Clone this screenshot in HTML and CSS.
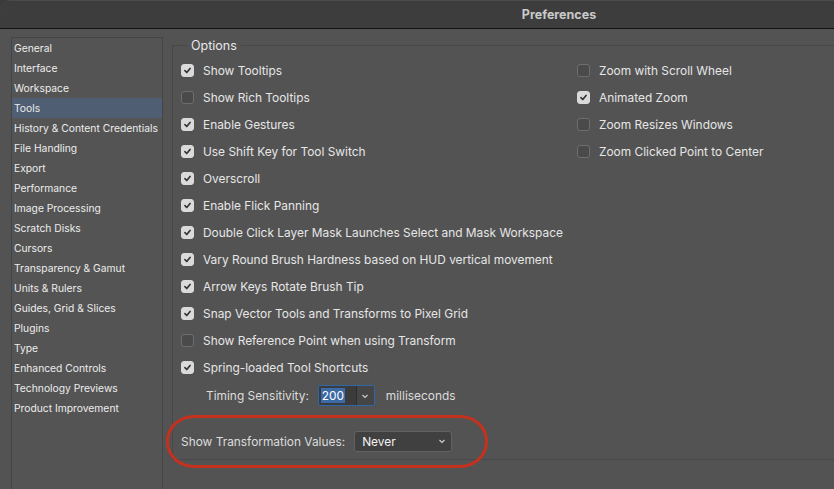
FILE: index.html
```html
<!DOCTYPE html>
<html lang="en">
  <head>
    <meta charset="UTF-8" />
    <meta name="viewport" content="width=device-width, initial-scale=1.0" />
    <title>Preferences</title>
    <link rel="stylesheet" href="styles.css">
  </head>
  <body>
    <div class="window">
      <header class="titlebar">Preferences</header>

      <div class="content">
        <nav class="sidebar">
          <ul>
            <li>General</li>
            <li>Interface</li>
            <li>Workspace</li>
            <li class="selected">Tools</li>
            <li>History &amp; Content Credentials</li>
            <li>File Handling</li>
            <li>Export</li>
            <li>Performance</li>
            <li>Image Processing</li>
            <li>Scratch Disks</li>
            <li>Cursors</li>
            <li>Transparency &amp; Gamut</li>
            <li>Units &amp; Rulers</li>
            <li>Guides, Grid &amp; Slices</li>
            <li>Plugins</li>
            <li>Type</li>
            <li>Enhanced Controls</li>
            <li>Technology Previews</li>
            <li>Product Improvement</li>
          </ul>
        </nav>

        <section class="main">
          <fieldset class="options">
            <legend>Options</legend>

            <div class="columns">
              <div class="col left-col">
                <label class="opt"><span class="box on"><svg viewBox="0 0 12 12"><path d="M3.2 6.2 L5.2 8.2 L8.8 3.8" /></svg></span>Show Tooltips</label>
                <label class="opt"><span class="box"></span>Show Rich Tooltips</label>
                <label class="opt"><span class="box on"><svg viewBox="0 0 12 12"><path d="M3.2 6.2 L5.2 8.2 L8.8 3.8" /></svg></span>Enable Gestures</label>
                <label class="opt"><span class="box on"><svg viewBox="0 0 12 12"><path d="M3.2 6.2 L5.2 8.2 L8.8 3.8" /></svg></span>Use Shift Key for Tool Switch</label>
                <label class="opt"><span class="box on"><svg viewBox="0 0 12 12"><path d="M3.2 6.2 L5.2 8.2 L8.8 3.8" /></svg></span>Overscroll</label>
                <label class="opt"><span class="box on"><svg viewBox="0 0 12 12"><path d="M3.2 6.2 L5.2 8.2 L8.8 3.8" /></svg></span>Enable Flick Panning</label>
                <label class="opt"><span class="box on"><svg viewBox="0 0 12 12"><path d="M3.2 6.2 L5.2 8.2 L8.8 3.8" /></svg></span>Double Click Layer Mask Launches Select and Mask Workspace</label>
                <label class="opt"><span class="box on"><svg viewBox="0 0 12 12"><path d="M3.2 6.2 L5.2 8.2 L8.8 3.8" /></svg></span>Vary Round Brush Hardness based on HUD vertical movement</label>
                <label class="opt"><span class="box on"><svg viewBox="0 0 12 12"><path d="M3.2 6.2 L5.2 8.2 L8.8 3.8" /></svg></span>Arrow Keys Rotate Brush Tip</label>
                <label class="opt"><span class="box on"><svg viewBox="0 0 12 12"><path d="M3.2 6.2 L5.2 8.2 L8.8 3.8" /></svg></span>Snap Vector Tools and Transforms to Pixel Grid</label>
                <label class="opt"><span class="box"></span>Show Reference Point when using Transform</label>
                <label class="opt"><span class="box on"><svg viewBox="0 0 12 12"><path d="M3.2 6.2 L5.2 8.2 L8.8 3.8" /></svg></span>Spring-loaded Tool Shortcuts</label>
              </div>
              <div class="col right-col">
                <label class="opt"><span class="box"></span>Zoom with Scroll Wheel</label>
                <label class="opt"><span class="box on"><svg viewBox="0 0 12 12"><path d="M3.2 6.2 L5.2 8.2 L8.8 3.8" /></svg></span>Animated Zoom</label>
                <label class="opt"><span class="box"></span>Zoom Resizes Windows</label>
                <label class="opt"><span class="box"></span>Zoom Clicked Point to Center</label>
              </div>
            </div>

            <div class="timing">
              <span>Timing Sensitivity:</span>
              <span class="combo">
                <span class="combo-value"><span class="sel">200</span></span>
                <span class="combo-arrow"><svg viewBox="0 0 10 10"><path d="M2.5 4 L5 6.5 L7.5 4" /></svg></span>
              </span>
              <span>milliseconds</span>
            </div>

            <div class="transform">
              <span>Show Transformation Values:</span>
              <span class="dropdown">
                <span>Never</span>
                <svg viewBox="0 0 10 10"><path d="M2.5 4 L5 6.5 L7.5 4" /></svg>
              </span>
            </div>
          </fieldset>

          <div class="highlight"></div>
        </section>
      </div>
    </div>
  </body>
</html>
```

FILE: styles.css
```css
* {
  box-sizing: border-box;
}
html,
body {
  margin: 0;
  padding: 0;
  height: 100%;
  overflow: hidden;
}
body {
  background: #3a3a3a;
  font-family: Inter, "Liberation Sans", sans-serif;
  color: #e4e4e4;
}
.window {
  height: 100%;
  background: #535353;
  border-top-left-radius: 11px;
  overflow: hidden;
  display: flex;
  flex-direction: column;
}
.titlebar {
  height: 29px;
  flex: none;
  background: #3d3d3d;
  border-bottom: 1px solid #111;
  border-top: 1px solid #4a4a4a;
  color: #c9c9c9;
  font-weight: 700;
  font-size: 12.5px;
  display: flex;
  align-items: center;
  justify-content: center;
  padding-left: 284px;
}
.content {
  flex: 1;
  display: flex;
  padding: 8px 0 0 11px;
}
.sidebar {
  width: 152px;
  flex: none;
  border: 1px solid #454545;
  border-bottom: none;
  background: #545454;
}
.sidebar ul {
  list-style: none;
  margin: 0;
  padding: 0;
}
.sidebar li {
  height: 20px;
  line-height: 20px;
  padding-left: 2px;
  font-size: 10.3px;
  color: #ececec;
  white-space: nowrap;
}
.sidebar li.selected {
  background: #4f5e72;
}
.main {
  flex: 1;
  position: relative;
  padding-left: 9px;
}
.options {
  margin: 1px -20px 0 0;
  border: 1px solid #484848;
  border-right: none;
  padding: 4px 0 12px 8px;
  height: 422px;
}
.options legend {
  font-size: 12.5px;
  color: #e8e8e8;
  padding: 0 4px;
  margin-left: 6px;
}
.columns {
  display: flex;
}
.left-col {
  width: 396px;
}
.opt {
  display: flex;
  align-items: center;
  height: 27px;
  font-size: 11.9px;
  white-space: nowrap;
  color: #e6e6e6;
}
.box {
  width: 13px;
  height: 13px;
  border-radius: 3px;
  border: 1px solid #6e6e6e;
  background: #4a4a4a;
  margin-right: 9px;
  flex: none;
  display: flex;
}
.box.on {
  background: #dadada;
  border-color: #dadada;
}
.box svg {
  width: 11px;
  height: 11px;
}
.box path {
  fill: none;
  stroke: #333;
  stroke-width: 1.8;
  stroke-linecap: round;
  stroke-linejoin: round;
}
.timing {
  display: flex;
  align-items: center;
  height: 29px;
  padding-left: 25px;
  font-size: 11.9px;
  color: #dcdcdc;
  gap: 9px;
}
.combo {
  display: flex;
  height: 21px;
  width: 57px;
  border: 1px solid #2f67a8;
  border-radius: 2px;
  background: #3b3b3b;
  margin-right: 2px;
}
.combo-value {
  flex: 1;
  display: flex;
  align-items: center;
  padding-left: 2px;
}
.sel {
  background: #3c6aa6;
  color: #fff;
  padding: 0 1px;
  line-height: 15px;
}
.combo-arrow {
  width: 18px;
  border-left: 1px solid #2e2e2e;
  background: #454545;
  display: flex;
  align-items: center;
  justify-content: center;
}
.combo-arrow svg,
.dropdown svg {
  width: 10px;
  height: 10px;
}
.combo-arrow path,
.dropdown path {
  fill: none;
  stroke: #d0d0d0;
  stroke-width: 1.1;
}
.transform {
  display: flex;
  align-items: center;
  height: 24px;
  margin-top: 19px;
  font-size: 11.9px;
  color: #dcdcdc;
  gap: 9px;
}
.dropdown {
  width: 98px;
  height: 21px;
  border: 1px solid #626262;
  border-radius: 3px;
  background: #404040;
  color: #f2f2f2;
  display: flex;
  align-items: center;
  justify-content: space-between;
  padding: 0 4px 0 7px;
}
.highlight {
  position: absolute;
  left: 3px;
  top: 378px;
  width: 322px;
  height: 53px;
  border: 3px solid #c4321f;
  border-radius: 28px / 26px;
}
```
